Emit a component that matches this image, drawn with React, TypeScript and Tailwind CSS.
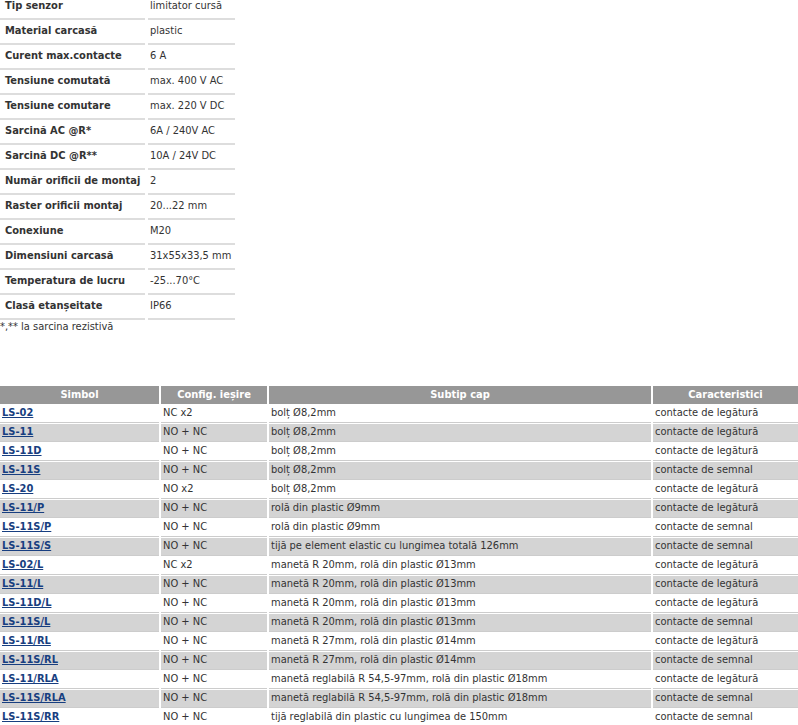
const FONT = "font-['DejaVu_Sans_Condensed','Liberation_Sans',sans-serif]";

const SPECS: [string, string][] = [
  ["Tip senzor", "limitator cursă"],
  ["Material carcasă", "plastic"],
  ["Curent max.contacte", "6 A"],
  ["Tensiune comutată", "max. 400 V AC"],
  ["Tensiune comutare", "max. 220 V DC"],
  ["Sarcină AC @R*", "6A / 240V AC"],
  ["Sarcină DC @R**", "10A / 24V DC"],
  ["Număr orificii de montaj", "2"],
  ["Raster orificii montaj", "20...22 mm"],
  ["Conexiune", "M20"],
  ["Dimensiuni carcasă", "31x55x33,5 mm"],
  ["Temperatura de lucru", "-25...70°C"],
  ["Clasă etanșeitate", "IP66"],
];

const BOLT = "bolț Ø8,2mm";
const R20 = "manetă R 20mm, rolă din plastic Ø13mm";
const R27 = "manetă R 27mm, rolă din plastic Ø14mm";
const RLA = "manetă reglabilă R 54,5-97mm, rolă din plastic Ø18mm";
const LEG = "contacte de legătură";
const SEM = "contacte de semnal";
const NONC = "NO + NC";

const ROWS: [string, string, string, string][] = [
  ["LS-02", "NC x2", BOLT, LEG],
  ["LS-11", NONC, BOLT, LEG],
  ["LS-11D", NONC, BOLT, LEG],
  ["LS-11S", NONC, BOLT, SEM],
  ["LS-20", "NO x2", BOLT, LEG],
  ["LS-11/P", NONC, "rolă din plastic Ø9mm", LEG],
  ["LS-11S/P", NONC, "rolă din plastic Ø9mm", SEM],
  ["LS-11S/S", NONC, "tijă pe element elastic cu lungimea totală 126mm", SEM],
  ["LS-02/L", "NC x2", R20, LEG],
  ["LS-11/L", NONC, R20, LEG],
  ["LS-11D/L", NONC, R20, LEG],
  ["LS-11S/L", NONC, R20, SEM],
  ["LS-11/RL", NONC, R27, LEG],
  ["LS-11S/RL", NONC, R27, SEM],
  ["LS-11/RLA", NONC, RLA, LEG],
  ["LS-11S/RLA", NONC, RLA, SEM],
  ["LS-11S/RR", NONC, "tijă reglabilă din plastic cu lungimea de 150mm", SEM],
];

const COLS = "grid grid-cols-[159px_106px_382px_1fr] gap-x-[2px]";

export default function App() {
  return (
    <div className={`${FONT} w-[798px] h-[725px] overflow-hidden bg-white text-[11px] text-[#333]`}>
      {/* Specs */}
      <div className="-mt-[5px] w-[235px]">
        {SPECS.map(([k, v]) => (
          <div key={k} className="grid grid-cols-[145px_87px] gap-x-[3px]">
            <div className="h-[25px] border-b-2 border-[#dddddd] pl-[5px] flex items-center font-bold">{k}</div>
            <div className="h-[25px] border-b-2 border-[#dddddd] pl-[2px] flex items-center">{v}</div>
          </div>
        ))}
      </div>
      <div className="leading-[14px]">*,** la sarcina rezistivă</div>

      {/* Models */}
      <div className="mt-[52px]">
        <div className={`${COLS} mb-[1px]`}>
          {["Simbol", "Config. ieșire", "Subtip cap", "Caracteristici"].map((h) => (
            <div key={h} className="h-[18px] bg-[#979797] text-white font-bold flex items-center justify-center">
              {h}
            </div>
          ))}
        </div>
        {ROWS.map(([sym, cfg, cap, car], i) => {
          const bg = i % 2 === 1 ? "bg-[#d4d4d4]" : "bg-white";
          const cell = `h-[18px] border-b border-[#cccccc] pl-[2px] flex items-center whitespace-nowrap ${bg}`;
          return (
            <div key={sym} className={`${COLS} mb-[1px]`}>
              <div className={cell}>
                <a href="#" className="font-bold underline text-[#173e80]">{sym}</a>
              </div>
              <div className={cell}>{cfg}</div>
              <div className={cell}>{cap}</div>
              <div className={cell}>{car}</div>
            </div>
          );
        })}
      </div>
    </div>
  );
}
